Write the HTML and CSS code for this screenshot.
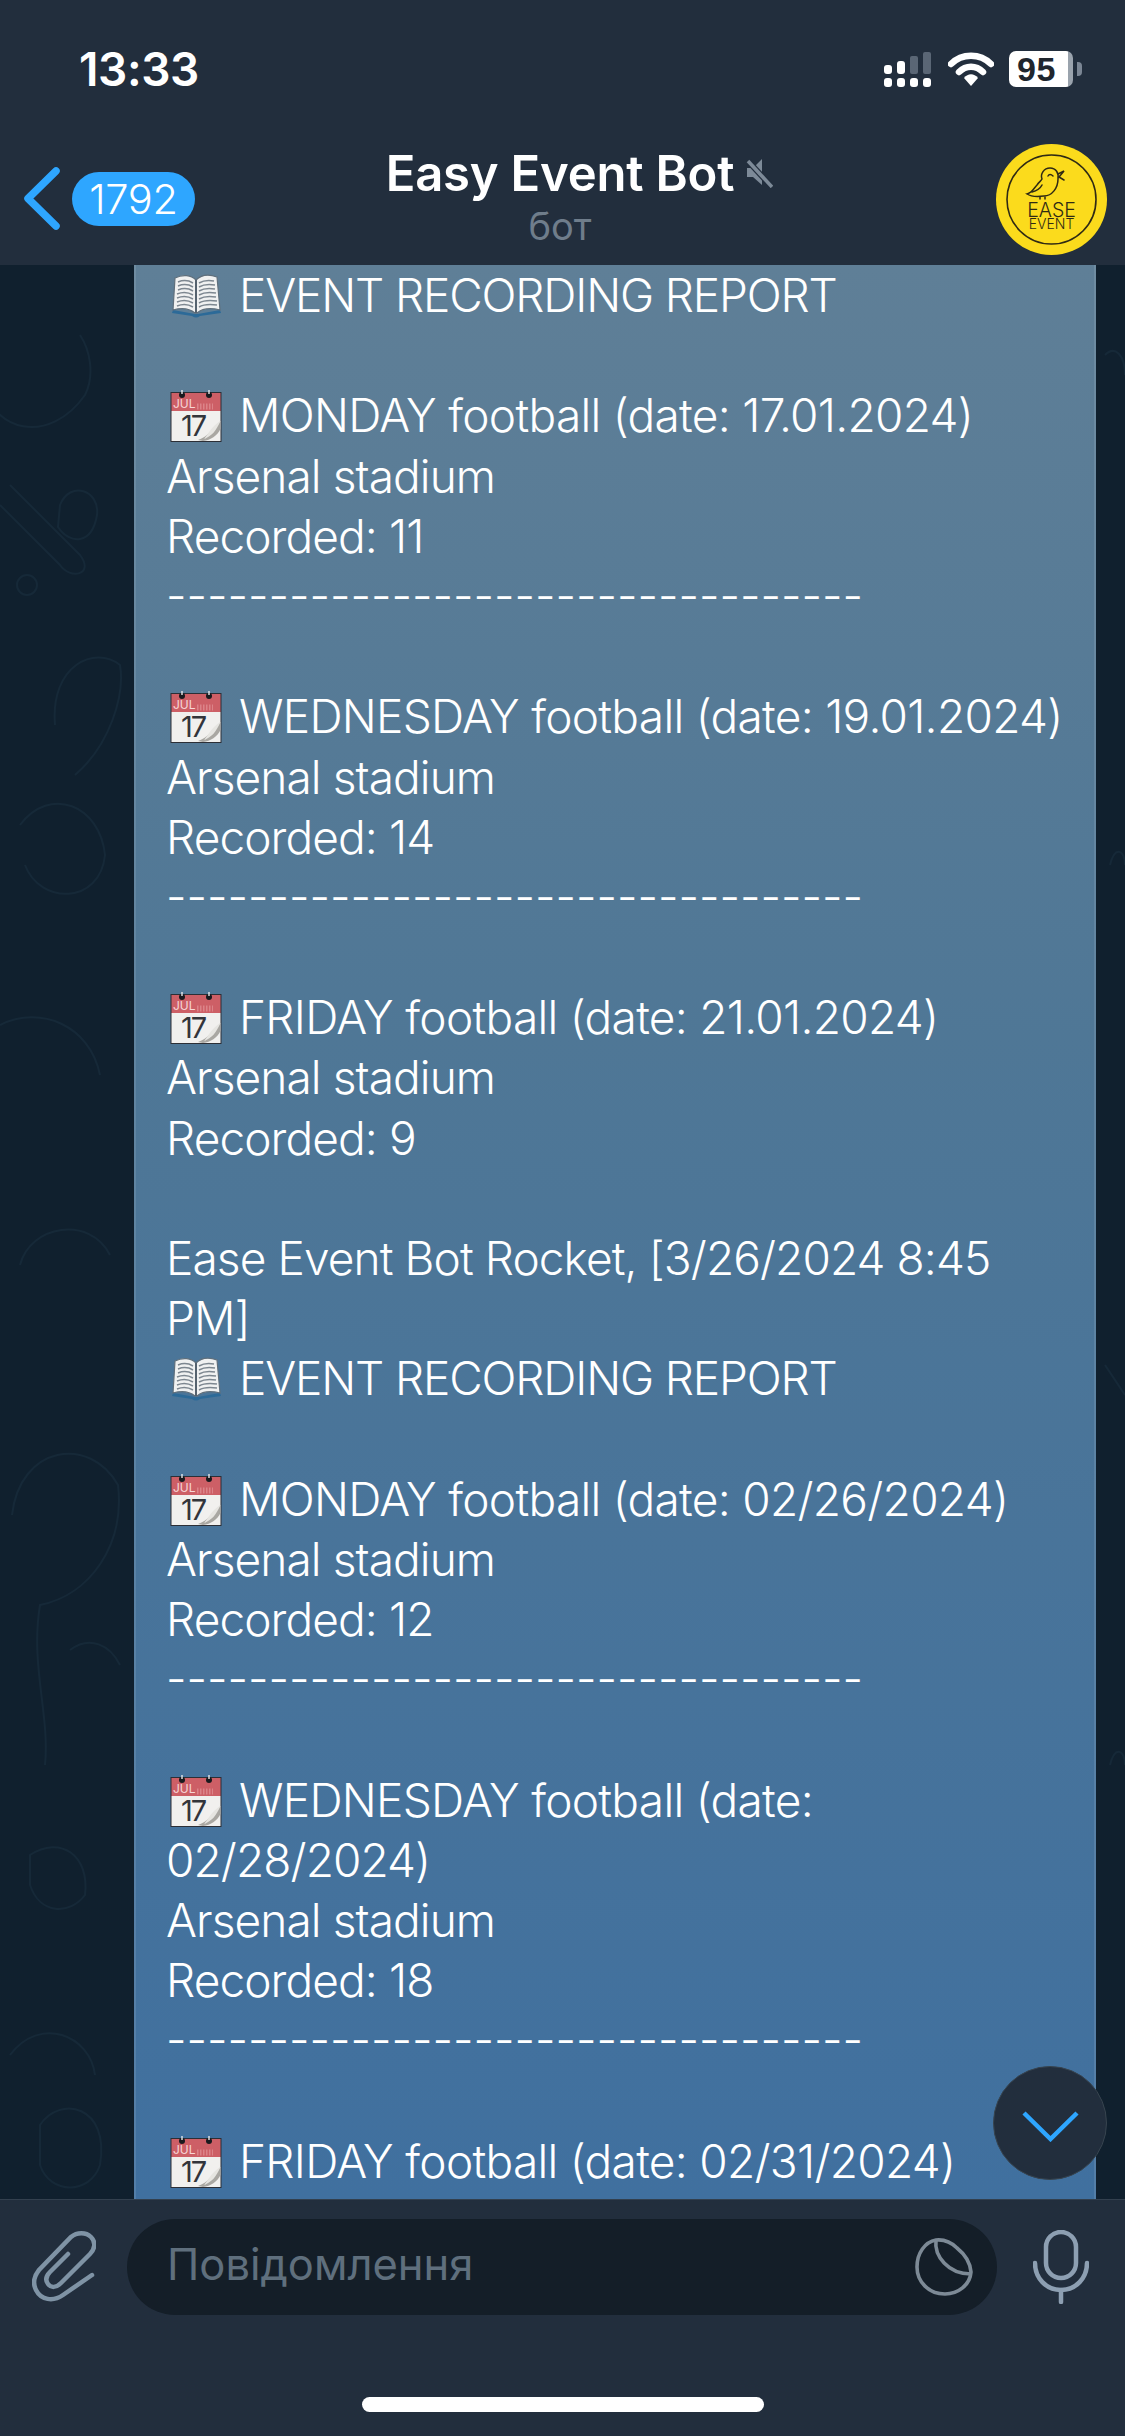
FILE: index.html
```html
<!DOCTYPE html>
<html lang="uk">
<head>
  <meta charset="UTF-8">
  <title>Easy Event Bot</title>
  <link rel="stylesheet" href="styles.css">
</head>
<body>
  <!-- shared emoji pictures -->
  <svg class="defs" width="0" height="0">
    <symbol id="cal" viewBox="0 0 52 52">
      <rect x="0.5" y="2" width="51" height="50" fill="#2c2f36"/>
      <rect x="1.5" y="3" width="49" height="18" fill="#cd5f66"/>
      <rect x="1.5" y="21" width="49" height="30" fill="#f1f0ee"/>
      <path d="M27 15H43M27 18H43" stroke="#dc8388" stroke-width="3" stroke-dasharray="1.5 1.5"/>
      <path d="M50.5 31 L50.5 39 C47 46 41 50 33 51 L28 50 C38 47 43 38 50.5 31Z" fill="#a9a7a2"/>
      <path d="M50.5 31 C46 41 42 46 34 49 C39 43 41 37 50.5 31Z" fill="#e6e5e1"/>
      <circle cx="12" cy="5" r="3" fill="#191a1e"/>
      <circle cx="39" cy="5" r="3" fill="#191a1e"/>
      <path d="M12 0V4M39 0V4" stroke="#e8e8e8" stroke-width="1.4"/>
    </symbol>
    <symbol id="book" viewBox="0 0 52 52">
      <path d="M3 40 L25 44 H28 L50 40 L51 43 L30 46 Q26 49 22 46 L2 43Z" fill="#2c6a98"/>
      <path d="M5 8 C13 4 21 5 26 10 C31 5 39 4 47 7 L50 40 C42 38 33 38 27 43 H25 C19 38 10 38 3 40Z" fill="#f0f1f1" stroke="#5f6f7c" stroke-width="1.2"/>
      <path d="M26 10V43" stroke="#55626e" stroke-width="2"/>
      <path d="M8 12 C13 10 18 10 23 13M8 16 C13 14 18 14 23 17M8 20 C13 18 18 18 23 21M7 24 C12 22 18 22 23 25M7 28 C12 26 18 26 23 29M7 32 C12 30 18 30 23 33M7 36 C12 34 18 34 23 37M29 13 C34 10 39 10 44 11M29 17 C34 14 39 14 45 15M29 21 C34 18 39 18 45 19M29 25 C34 22 40 22 46 23M29 29 C34 26 40 26 46 27M29 33 C34 30 40 30 47 31M29 37 C34 34 40 34 47 35" fill="none" stroke="#7d8790" stroke-width="1.5"/>
    </symbol>
  </svg>

  <div class="phone">
    <header class="top">
      <div class="status">
        <span class="time">13:33</span>
        <div class="status-icons">
          <svg class="signal" width="47" height="35" viewBox="0 0 47 35">
            <g fill="#fff">
              <rect x="0" y="13" width="8" height="9" rx="3"/>
              <rect x="13" y="9" width="8" height="13" rx="3"/>
              <rect x="0" y="26" width="8" height="9" rx="3"/>
              <rect x="13" y="26" width="8" height="9" rx="3"/>
              <rect x="26" y="26" width="8" height="9" rx="3"/>
              <rect x="39" y="26" width="8" height="9" rx="3"/>
            </g>
            <g fill="#5a6675">
              <rect x="26" y="4" width="8" height="18" rx="2"/>
              <rect x="39" y="0" width="8" height="22" rx="2"/>
            </g>
          </svg>
          <svg class="wifi" width="46" height="34" viewBox="0 0 46 34">
            <path d="M3 12 C14 1 32 1 43 12" fill="none" stroke="#fff" stroke-width="6.5" stroke-linecap="round"/>
            <path d="M11 20 C18 13 28 13 35 20" fill="none" stroke="#fff" stroke-width="6.5" stroke-linecap="round"/>
            <path d="M16 26 C20 21 26 21 30 26 L23 34Z" fill="#fff"/>
          </svg>
          <div class="battery"><span class="battery-level">95</span></div>
          <span class="battery-nub"></span>
        </div>
      </div>
      <nav class="nav">
        <div class="nav-left">
          <svg width="36" height="63" viewBox="0 0 36 63">
            <path d="M32 4 L4 31.5 L32 59" fill="none" stroke="#2ea6ff" stroke-width="7.5" stroke-linecap="round" stroke-linejoin="round"/>
          </svg>
          <span class="badge">1792</span>
        </div>
        <div class="title-box">
          <div class="title">Easy Event Bot
            <svg class="mute" width="27" height="29" viewBox="0 0 27 29">
              <path d="M1 9 H7 L16 0 V26 L7 18 H1Z" fill="#7d8a98"/>
              <path d="M2 2 L26 28" stroke="#222e3d" stroke-width="6"/>
              <path d="M2 2 L26 28" stroke="#7d8a98" stroke-width="3.5"/>
            </svg>
          </div>
          <div class="subtitle">бот</div>
        </div>
        <div class="nav-right">
          <svg class="avatar" width="111" height="111" viewBox="0 0 111 111">
            <circle cx="55.5" cy="55.5" r="55.5" fill="#fbdb1c"/>
            <circle cx="55.5" cy="55.5" r="44.5" fill="none" stroke="#2f2a14" stroke-width="1.6"/>
            <g fill="none" stroke="#2f2a14" stroke-width="1.5" stroke-linecap="round">
              <path d="M46 35 C44 30 48 24 54 24 C60 24 63 29 62 35 C62 44 56 52 48 52 C40 53 34 52 31 50 C36 49 38 44 41 41 C43 38 45 37 46 35Z"/>
              <path d="M62 30 L68 27 L63 33 L68 36"/>
              <path d="M36 48 C40 47 44 45 46 41"/>
              <path d="M52 32 C53 30 55 30 57 32"/>
              <path d="M44 53 V55 M49 53 V55"/>
            </g>
            <text x="55.5" y="73" class="avatar-big">EASE</text>
            <text x="55.5" y="85" class="avatar-small">EVENT</text>
          </svg>
        </div>
      </nav>
    </header>

    <main class="chat">
      <svg class="wallpaper" width="1125" height="1934" viewBox="0 0 1125 1934">
        <g fill="none" stroke="#223a4c" stroke-width="2">
          <path d="M-20 110 C-10 170 50 180 85 130 C95 110 90 85 80 70"/>
          <path d="M60 240 C70 215 100 225 97 250 C92 280 70 280 58 262Z"/>
          <path d="M10 220 L80 290 C95 310 70 315 60 300 L0 240"/>
          <path d="M55 460 C50 400 95 380 120 400 C125 430 110 480 75 510"/>
          <circle cx="27" cy="320" r="10"/>
          <path d="M20 560 C50 520 100 540 105 590 C100 640 40 640 25 600"/>
          <path d="M0 760 C40 740 90 760 100 810"/>
          <path d="M20 1000 C30 960 90 950 110 990"/>
          <path d="M12 1250 C20 1180 90 1170 118 1220 C125 1280 90 1330 40 1340 C30 1400 50 1450 45 1500"/>
          <path d="M70 1385 C90 1370 110 1380 120 1400"/>
          <path d="M30 1590 C60 1570 90 1590 85 1630 C70 1650 40 1650 30 1620Z"/>
          <path d="M10 1790 C40 1750 90 1770 95 1810"/>
          <path d="M40 1860 C60 1830 110 1840 100 1900 C90 1930 50 1930 40 1900Z"/>
          <path d="M1105 90 C1115 80 1125 90 1125 110"/>
          <path d="M1110 600 C1115 580 1125 585 1125 600"/>
          <path d="M1105 1100 L1125 1130"/>
          <path d="M1110 1500 C1115 1480 1125 1485 1125 1500"/>
        </g>
      </svg>
      <div class="bubble">
        <div class="line report"><svg class="emoji"><use href="#book"/></svg>EVENT RECORDING REPORT</div>
        <div class="line"></div>
        <div class="line event"><svg class="emoji" viewBox="0 0 52 52"><use href="#cal" width="52" height="52"/><text x="3" y="18" class="cal-month">JUL</text><text x="11" y="45.5" class="cal-day">17</text></svg>MONDAY football (date: 17.01.2024)</div>
        <div class="line">Arsenal stadium</div>
        <div class="line">Recorded: 11</div>
        <div class="line dash">----------------------------------</div>
        <div class="line"></div>
        <div class="line event"><svg class="emoji" viewBox="0 0 52 52"><use href="#cal" width="52" height="52"/><text x="3" y="18" class="cal-month">JUL</text><text x="11" y="45.5" class="cal-day">17</text></svg>WEDNESDAY football (date: 19.01.2024)</div>
        <div class="line">Arsenal stadium</div>
        <div class="line">Recorded: 14</div>
        <div class="line dash">----------------------------------</div>
        <div class="line"></div>
        <div class="line event"><svg class="emoji" viewBox="0 0 52 52"><use href="#cal" width="52" height="52"/><text x="3" y="18" class="cal-month">JUL</text><text x="11" y="45.5" class="cal-day">17</text></svg>FRIDAY football (date: 21.01.2024)</div>
        <div class="line">Arsenal stadium</div>
        <div class="line">Recorded: 9</div>
        <div class="line"></div>
        <div class="line">Ease Event Bot Rocket, [3/26/2024 8:45</div>
        <div class="line">PM]</div>
        <div class="line report"><svg class="emoji"><use href="#book"/></svg>EVENT RECORDING REPORT</div>
        <div class="line"></div>
        <div class="line event"><svg class="emoji" viewBox="0 0 52 52"><use href="#cal" width="52" height="52"/><text x="3" y="18" class="cal-month">JUL</text><text x="11" y="45.5" class="cal-day">17</text></svg>MONDAY football (date: 02/26/2024)</div>
        <div class="line">Arsenal stadium</div>
        <div class="line">Recorded: 12</div>
        <div class="line dash">----------------------------------</div>
        <div class="line"></div>
        <div class="line event"><svg class="emoji" viewBox="0 0 52 52"><use href="#cal" width="52" height="52"/><text x="3" y="18" class="cal-month">JUL</text><text x="11" y="45.5" class="cal-day">17</text></svg>WEDNESDAY football (date:</div>
        <div class="line">02/28/2024)</div>
        <div class="line">Arsenal stadium</div>
        <div class="line">Recorded: 18</div>
        <div class="line dash">----------------------------------</div>
        <div class="line"></div>
        <div class="line event"><svg class="emoji" viewBox="0 0 52 52"><use href="#cal" width="52" height="52"/><text x="3" y="18" class="cal-month">JUL</text><text x="11" y="45.5" class="cal-day">17</text></svg>FRIDAY football (date: 02/31/2024)</div>
      </div>
      <button class="scroll-down">
        <svg width="57" height="32" viewBox="0 0 57 32">
          <path d="M2 3 L28.5 29 L55 3" fill="none" stroke="#2ea6ff" stroke-width="4.5"/>
        </svg>
      </button>
    </main>

    <footer class="panel">
      <div class="input-row">
        <svg class="clip" width="64" height="72" viewBox="-1 0 64 72">
          <path d="M59 44 L30 64 C20 71 8 69 3 59 C-1 51 2 44 6 39 L38 6 C44 1 53 1 58 6 C63 11 62 18 57 23 L28 52 C23 57 18 57 15 53 C12 49 13 45 17 41 L35 23" fill="none" stroke="#7f93a5" stroke-width="4.5" stroke-linecap="round"/>
        </svg>
        <div class="field">
          <span class="placeholder">Повідомлення</span>
          <svg width="58" height="58" viewBox="0 0 58 58">
            <path d="M21 2 C31 1 37 5 42 10 C47 14 55 22 56 34 C55 47 43 56 30 56 C14 56 2 44 2 29 C2 15 10 4 21 2Z" fill="none" stroke="#7d8a96" stroke-width="3.6" stroke-linejoin="round"/>
            <path d="M21 2 C19 18 33 36 56 36" fill="none" stroke="#7d8a96" stroke-width="3.6"/>
          </svg>
        </div>
        <svg class="mic" width="56" height="74" viewBox="0 0 56 74">
          <rect x="13" y="2" width="30" height="46" rx="15" fill="none" stroke="#8d9fb2" stroke-width="4.5"/>
          <path d="M2 33 C2 48 13 60 28 60 C43 60 54 48 54 33" fill="none" stroke="#8d9fb2" stroke-width="4.5" stroke-linecap="round"/>
          <path d="M28 60 V72" stroke="#8d9fb2" stroke-width="4.5" stroke-linecap="round"/>
        </svg>
      </div>
      <div class="home-bar"></div>
    </footer>
  </div>
</body>
</html>
```

FILE: styles.css
```css
* { margin: 0; padding: 0; box-sizing: border-box; }
body {
  background: #222e3d;
  color: #fff;
  font-family: Inter, 'Noto Sans', sans-serif;
  overflow: hidden;
}
.defs { position: absolute; }
.phone {
  width: 1125px;
  height: 2436px;
  display: flex;
  flex-direction: column;
}

/* Kopfbereich */
.top {
  height: 265px;
  background: #222e3d;
  flex-shrink: 0;
}
.status {
  display: flex;
  justify-content: space-between;
  align-items: center;
  height: 36px;
  margin-top: 51px;
  padding: 0 43px 0 79px;
}
.time { font-size: 46px; font-weight: 600; letter-spacing: -0.4px; }
.status-icons { display: flex; align-items: center; }
.wifi { margin-left: 17px; }
.battery {
  width: 64px;
  height: 36px;
  margin-left: 15px;
  background: linear-gradient(90deg, #fff 92%, #9aa3ad 92%);
  border-radius: 7px;
  display: flex;
  align-items: center;
  padding-left: 8px;
}
.battery-level {
  color: #20262e;
  font-family: 'Liberation Sans', sans-serif;
  font-size: 34px;
  font-weight: 700;
  letter-spacing: 0.6px;
}
.battery-nub {
  width: 5px;
  height: 14px;
  margin-left: 4px;
  background: #7b8694;
  border-radius: 0 4px 4px 0;
}
.nav {
  display: grid;
  grid-template-columns: 1fr auto 1fr;
  align-items: center;
  height: 111px;
  margin-top: 57px;
  padding: 0 18px 0 13px;
}
.nav-left { display: flex; align-items: center; gap: 12px; margin: -2px 0 0 11px; }
.badge {
  width: 123px;
  height: 54px;
  background: #2ea6ff;
  border-radius: 27px;
  font-size: 41.5px;
  font-weight: 300;
  letter-spacing: -0.3px;
  display: flex;
  align-items: center;
  justify-content: center;
}
.title-box { text-align: center; margin-top: -2px; }
.title {
  position: relative;
  font-size: 49px;
  font-weight: 600;
  line-height: 54px;
  letter-spacing: -0.2px;
}
.mute { position: absolute; left: calc(100% + 12px); top: 12px; }
.subtitle { color: #6f7d8b; font-size: 38px; line-height: 50px; }
.nav-right { display: flex; justify-content: flex-end; }
.avatar-big, .avatar-small {
  fill: #2f2a14;
  font-family: Inter, sans-serif;
  font-weight: 300;
  text-anchor: middle;
}
.avatar-big { font-size: 19.5px; }
.avatar-small { font-size: 14px; }

/* Chat */
.chat {
  position: relative;
  flex: 1;
  min-height: 0;
  overflow: hidden;
  background: #10202e;
  padding-left: 134px;
  padding-right: 29px;
}
.wallpaper { position: absolute; left: 0; top: 0; opacity: 0.35; }
.bubble {
  position: relative;
  height: 100%;
  padding: 0 0 0 30px;
  background: linear-gradient(180deg, #5f7f97 0%, #4f7796 40%, #40709f 100%);
  border-left: 2px solid rgba(255,255,255,0.1);
  border-right: 2px solid rgba(255,255,255,0.1);
  font-size: 46px;
  font-weight: 350;
  letter-spacing: -0.9px;
}
.line {
  height: 60.2px;
  line-height: 60.2px;
  white-space: nowrap;
}
.report { letter-spacing: -1.15px; }
.event { letter-spacing: -0.7px; }
.dash { letter-spacing: 0; font-size: 45.3px; }
.emoji {
  width: 52px;
  height: 52px;
  margin: 0 17px 0 4px;
  vertical-align: -10px;
}
.cal-month { fill: #f7d6d6; font-family: Inter, sans-serif; font-size: 12px; letter-spacing: 0; font-weight: 400; }
.cal-day { fill: #33353a; font-family: Inter, sans-serif; font-size: 29px; letter-spacing: -2px; font-weight: 400; }
.scroll-down {
  position: absolute;
  right: 18px;
  bottom: 19px;
  width: 114px;
  height: 114px;
  border: 1px solid #37444f;
  border-radius: 50%;
  background: #222e3d;
  display: flex;
  align-items: center;
  justify-content: center;
  padding-top: 6px;
}

/* Eingabe */
.panel {
  height: 237px;
  flex-shrink: 0;
  background: #222e3d;
  border-top: 1px solid #33404e;
}
.input-row {
  display: flex;
  align-items: center;
  height: 96px;
  margin-top: 19px;
  padding-left: 32px;
}
.field {
  width: 870px;
  height: 96px;
  margin-left: 31px;
  padding: 0 24px 6px 40px;
  background: #141e28;
  border-radius: 48px;
  display: flex;
  align-items: center;
  justify-content: space-between;
}
.field svg { margin-top: 6px; }
.placeholder { color: #5f6f7d; font-size: 43.5px; }
.mic { margin-left: 36px; }
.home-bar {
  width: 402px;
  height: 15px;
  margin: 82px auto 0;
  background: #fff;
  border-radius: 8px;
}
```
